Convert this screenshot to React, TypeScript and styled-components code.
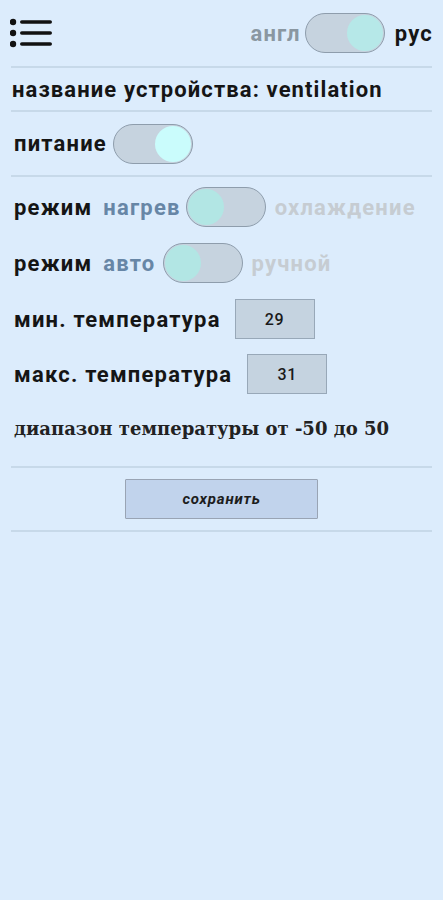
import React from "react";
import styled, { createGlobalStyle } from "styled-components";

const GlobalStyle = createGlobalStyle`
  html, body {
    margin: 0;
    padding: 0;
    background: #dcecfc;
  }
  body {
    font-family: Roboto, "Noto Sans", Arial, sans-serif;
    color: #151515;
  }
`;

export default function App() {
  return (
    <>
      <GlobalStyle />
      <Page>
        <Header>
          <MenuIcon viewBox="0 0 44 30">
            <circle cx="3" cy="4" r="3.2" />
            <circle cx="3" cy="15" r="3.2" />
            <circle cx="3" cy="26" r="3.2" />
            <rect x="10" y="2.2" width="32" height="3.6" rx="1.8" />
            <rect x="10" y="13.2" width="32" height="3.6" rx="1.8" />
            <rect x="10" y="24.2" width="32" height="3.6" rx="1.8" />
          </MenuIcon>
          <LangSwitch>
            <Option $tone="muted" $gap={4}>англ</Option>
            <Toggle $on knob="#b6e8e8" />
            <Option $tone="dark" $gap={0} style={{ marginLeft: 10 }}>
              рус
            </Option>
          </LangSwitch>
        </Header>
        <Divider />
        <NameRow>название устройства: ventilation</NameRow>
        <Divider />
        <PowerRow>
          <Label $gap={6}>питание</Label>
          <Toggle $on knob="#cafcfc" />
        </PowerRow>
        <Divider />
        <ModeRow $h={60}>
          <Label $gap={11}>режим</Label>
          <Option $tone="active" $gap={5}>нагрев</Option>
          <Toggle knob="#b2e6e4" />
          <Option $tone="faded" $gap={0} style={{ marginLeft: 9 }}>
            охлаждение
          </Option>
        </ModeRow>
        <ModeRow $h={52}>
          <Label $gap={11}>режим</Label>
          <Option $tone="active" $gap={8}>авто</Option>
          <Toggle knob="#b2e6e4" />
          <Option $tone="faded" $gap={0} style={{ marginLeft: 8 }}>
            ручной
          </Option>
        </ModeRow>
        <TempRow $h={60}>
          <Label $gap={14}>мин. температура</Label>
          <ValueBox>29</ValueBox>
        </TempRow>
        <TempRow $h={50}>
          <Label $gap={15}>макс. температура</Label>
          <ValueBox>31</ValueBox>
        </TempRow>
        <RangeNote>диапазон температуры от -50 до 50</RangeNote>
        <Divider />
        <ButtonRow>
          <SaveButton>сохранить</SaveButton>
        </ButtonRow>
        <Divider />
      </Page>
    </>
  );
}

function Toggle({ $on, knob }: { $on?: boolean; knob: string }) {
  return (
    <Track>
      <Knob $on={$on} $color={knob} />
    </Track>
  );
}

const Page = styled.div`
  padding: 0 11px;
  min-height: 900px;
  box-sizing: border-box;
`;

const Header = styled.div`
  height: 66px;
  display: flex;
  align-items: center;
  justify-content: space-between;
`;

const MenuIcon = styled.svg`
  width: 44px;
  height: 30px;
  fill: #111;
  margin-left: -1px;
`;

const LangSwitch = styled.div`
  display: flex;
  align-items: center;
  margin-right: -1px;
`;

const Divider = styled.div`
  height: 2px;
  background: #c7d9e9;
`;

const NameRow = styled.div`
  height: 42px;
  display: flex;
  align-items: center;
  font-size: 22px;
  font-weight: 700;
  letter-spacing: 1.1px;
  padding-left: 1px;
`;

const Label = styled.span<{ $gap: number }>`
  font-size: 22px;
  font-weight: 700;
  letter-spacing: 1.2px;
  color: #151515;
  margin-right: ${(p) => p.$gap}px;
`;

const PowerRow = styled.div`
  height: 63px;
  display: flex;
  align-items: center;
  padding-left: 3px;
`;

const ModeRow = styled.div<{ $h: number }>`
  height: ${(p) => p.$h}px;
  display: flex;
  align-items: center;
  padding-left: 3px;
`;

const toneColors: Record<string, string> = {
  muted: "#8a97a1",
  dark: "#151515",
  active: "#6786a6",
  faded: "#c6ccd2",
};

const Option = styled.span<{ $tone: string; $gap: number }>`
  font-size: 22px;
  font-weight: 700;
  letter-spacing: 1.2px;
  color: ${(p) => toneColors[p.$tone]};
  margin-right: ${(p) => p.$gap}px;
`;

const Track = styled.div`
  width: 80px;
  height: 40px;
  flex-shrink: 0;
  box-sizing: border-box;
  border: 1.5px solid #8e9dac;
  border-radius: 20px;
  background: #c6d3df;
  display: flex;
  align-items: center;
  padding: 0 1px;
`;

const Knob = styled.div<{ $on?: boolean; $color: string }>`
  width: 36px;
  height: 36px;
  border-radius: 50%;
  background: ${(p) => p.$color};
  margin-left: ${(p) => (p.$on ? "auto" : "0")};
`;

const TempRow = styled.div<{ $h: number }>`
  height: ${(p) => p.$h}px;
  display: flex;
  align-items: center;
  padding-left: 3px;
`;

const ValueBox = styled.div`
  width: 80px;
  height: 40px;
  box-sizing: border-box;
  border: 1px solid #98a8b8;
  background: #c5d3e0;
  display: flex;
  align-items: center;
  justify-content: center;
  font-size: 16px;
  font-weight: 500;
  letter-spacing: 0.8px;
  color: #1a1a1a;
`;

const RangeNote = styled.div`
  height: 58px;
  margin-bottom: 9px;
  display: flex;
  align-items: center;
  padding-left: 3px;
  font-family: "DejaVu Serif", "Liberation Serif", serif;
  font-size: 18px;
  font-weight: 700;
  color: #222;
`;

const ButtonRow = styled.div`
  height: 62px;
  display: flex;
  align-items: center;
  padding-left: 114px;
`;

const SaveButton = styled.button`
  width: 193px;
  height: 40px;
  box-sizing: border-box;
  border: 1px solid #99a4b4;
  border-radius: 1px;
  background: #c1d3ec;
  font-family: Roboto, "Noto Sans", Arial, sans-serif;
  font-size: 15px;
  font-weight: 700;
  font-style: italic;
  letter-spacing: 0.8px;
  color: #1d1d1d;
  padding: 0;
`;
